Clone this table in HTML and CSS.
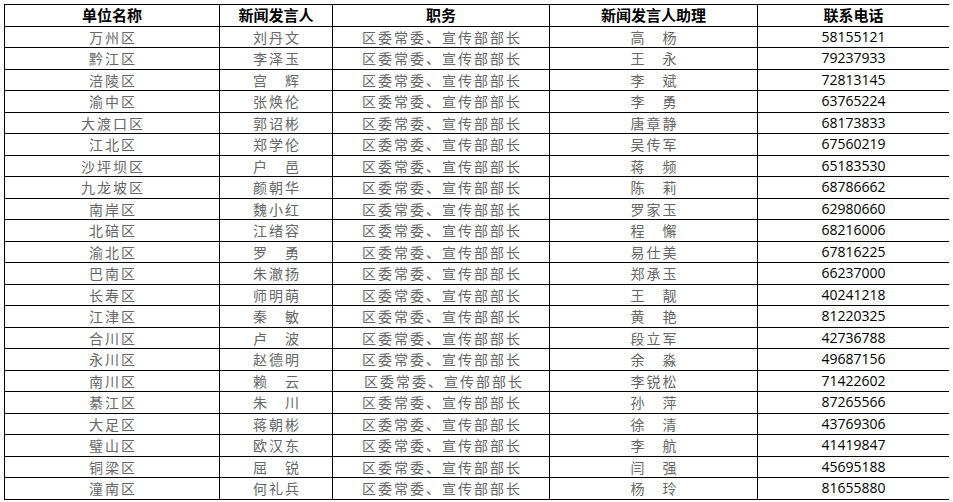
FILE: index.html
```html
<!DOCTYPE html>
<html lang="zh-CN">
<head>
<meta charset="utf-8">
<title>新闻发言人名单</title>
<link rel="stylesheet" href="styles.css">
</head>
<body>
<table class="roster">
<colgroup>
<col class="c1"><col class="c2"><col class="c3"><col class="c4"><col class="c5">
</colgroup>
<thead>
<tr><th>单位名称</th><th>新闻发言人</th><th>职务</th><th>新闻发言人助理</th><th>联系电话</th></tr>
</thead>
<tbody>
<tr><td>万州区</td><td>刘丹文</td><td>区委常委、宣传部部长</td><td>高　杨</td><td class="tel">58155121</td></tr>
<tr><td>黔江区</td><td>李泽玉</td><td>区委常委、宣传部部长</td><td>王　永</td><td class="tel">79237933</td></tr>
<tr><td>涪陵区</td><td>宫　辉</td><td>区委常委、宣传部部长</td><td>李　斌</td><td class="tel">72813145</td></tr>
<tr><td>渝中区</td><td>张焕伦</td><td>区委常委、宣传部部长</td><td>李　勇</td><td class="tel">63765224</td></tr>
<tr><td>大渡口区</td><td>郭诏彬</td><td>区委常委、宣传部部长</td><td>唐章静</td><td class="tel">68173833</td></tr>
<tr><td>江北区</td><td>郑学伦</td><td>区委常委、宣传部部长</td><td>吴传军</td><td class="tel">67560219</td></tr>
<tr><td>沙坪坝区</td><td>户　邑</td><td>区委常委、宣传部部长</td><td>蒋　频</td><td class="tel">65183530</td></tr>
<tr><td>九龙坡区</td><td>颜朝华</td><td>区委常委、宣传部部长</td><td>陈　莉</td><td class="tel">68786662</td></tr>
<tr><td>南岸区</td><td>魏小红</td><td>区委常委、宣传部部长</td><td>罗家玉</td><td class="tel">62980660</td></tr>
<tr><td>北碚区</td><td>江绪容</td><td>区委常委、宣传部部长</td><td>程　懈</td><td class="tel">68216006</td></tr>
<tr><td>渝北区</td><td>罗　勇</td><td>区委常委、宣传部部长</td><td>易仕美</td><td class="tel">67816225</td></tr>
<tr><td>巴南区</td><td>朱澈扬</td><td>区委常委、宣传部部长</td><td>郑承玉</td><td class="tel">66237000</td></tr>
<tr><td>长寿区</td><td>师明萌</td><td>区委常委、宣传部部长</td><td>王　靓</td><td class="tel">40241218</td></tr>
<tr><td>江津区</td><td>秦　敏</td><td>区委常委、宣传部部长</td><td>黄　艳</td><td class="tel">81220325</td></tr>
<tr><td>合川区</td><td>卢　波</td><td>区委常委、宣传部部长</td><td>段立军</td><td class="tel">42736788</td></tr>
<tr><td>永川区</td><td>赵德明</td><td>区委常委、宣传部部长</td><td>余　淼</td><td class="tel">49687156</td></tr>
<tr><td>南川区</td><td>赖　云</td><td class="shift">区委常委、宣传部部长</td><td>李锐松</td><td class="tel">71422602</td></tr>
<tr><td>綦江区</td><td>朱　川</td><td>区委常委、宣传部部长</td><td>孙　萍</td><td class="tel">87265566</td></tr>
<tr><td>大足区</td><td>蒋朝彬</td><td>区委常委、宣传部部长</td><td>徐　清</td><td class="tel">43769306</td></tr>
<tr><td>璧山区</td><td>欧汉东</td><td>区委常委、宣传部部长</td><td>李　航</td><td class="tel">41419847</td></tr>
<tr><td>铜梁区</td><td>屈　锐</td><td>区委常委、宣传部部长</td><td>闫　强</td><td class="tel">45695188</td></tr>
<tr><td>潼南区</td><td>何礼兵</td><td>区委常委、宣传部部长</td><td>杨　玲</td><td class="tel">81655880</td></tr>
</tbody>
</table>
</body>
</html>
```

FILE: styles.css
```css
html, body {
  background: #ffffff;
}
body {
  margin: 4px;
}
.roster {
  border-collapse: collapse;
  table-layout: fixed;
  width: 945px;
  font-family: "Noto Sans CJK SC", "Noto Sans", sans-serif;
}
.c1 { width: 215px; }
.c2 { width: 113px; }
.c3 { width: 217px; }
.c4 { width: 208px; }
.c5 { width: 192px; }
.roster th,
.roster td {
  border: 1px solid #000000;
  padding: 0;
  height: 20.5px;
  text-align: center;
  vertical-align: middle;
  white-space: nowrap;
  line-height: 16px;
}
.roster th {
  font-size: 15px;
  font-weight: 700;
  color: #000000;
}
.roster td {
  font-size: 14px;
  font-weight: 400;
  color: #666666;
  letter-spacing: 2px;
  text-indent: 2px;
}
.roster td.tel {
  font-family: "Open Sans", "Liberation Sans", sans-serif;
  font-size: 14px;
  color: #000000;
  letter-spacing: 0;
  text-indent: 0;
}
.roster td.shift {
  text-indent: 6px;
}
```
